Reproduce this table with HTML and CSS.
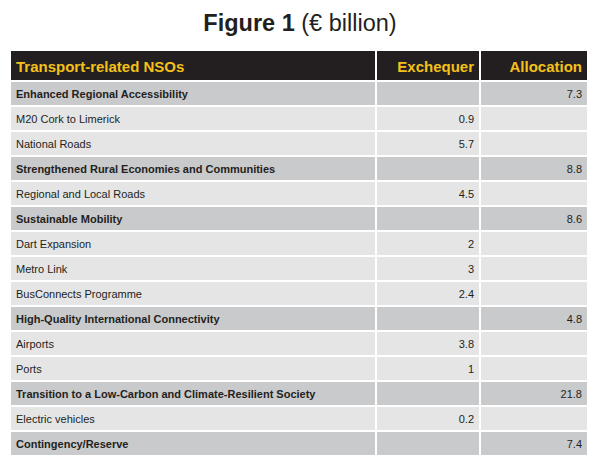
FILE: index.html
```html
<!DOCTYPE html>
<html>
<head>
<meta charset="utf-8">
<link rel="stylesheet" href="styles.css">
</head>
<body>
<h1 class="title"><b>Figure 1</b> (€ billion)</h1>
<table class="nso">
  <thead>
    <tr><th class="name">Transport-related NSOs</th><th class="num">Exchequer</th><th class="num">Allocation</th></tr>
  </thead>
  <tbody>
    <tr class="group"><td>Enhanced Regional Accessibility</td><td></td><td class="num">7.3</td></tr>
    <tr><td>M20 Cork to Limerick</td><td class="num">0.9</td><td></td></tr>
    <tr><td>National Roads</td><td class="num">5.7</td><td></td></tr>
    <tr class="group"><td>Strengthened Rural Economies and Communities</td><td></td><td class="num">8.8</td></tr>
    <tr><td>Regional and Local Roads</td><td class="num">4.5</td><td></td></tr>
    <tr class="group"><td>Sustainable Mobility</td><td></td><td class="num">8.6</td></tr>
    <tr><td>Dart Expansion</td><td class="num">2</td><td></td></tr>
    <tr><td>Metro Link</td><td class="num">3</td><td></td></tr>
    <tr><td>BusConnects Programme</td><td class="num">2.4</td><td></td></tr>
    <tr class="group"><td>High-Quality International Connectivity</td><td></td><td class="num">4.8</td></tr>
    <tr><td>Airports</td><td class="num">3.8</td><td></td></tr>
    <tr><td>Ports</td><td class="num">1</td><td></td></tr>
    <tr class="group"><td>Transition to a Low-Carbon and Climate-Resilient Society</td><td></td><td class="num">21.8</td></tr>
    <tr><td>Electric vehicles</td><td class="num">0.2</td><td></td></tr>
    <tr class="group"><td>Contingency/Reserve</td><td></td><td class="num">7.4</td></tr>
  </tbody>
</table>
</body>
</html>
```

FILE: styles.css
```css
html, body {
  margin: 0;
  padding: 0;
  background: #ffffff;
}
body {
  font-family: "Liberation Sans", Arial, sans-serif;
  color: #231f20;
  width: 600px;
  height: 471px;
  overflow: hidden;
}
.title {
  margin: 0;
  padding-top: 10px;
  height: 49px;
  box-sizing: border-box;
  text-align: center;
  font-size: 23.5px;
  line-height: 27px;
  font-weight: normal;
  color: #231f20;
}
.title b {
  font-weight: bold;
}
.nso {
  margin: 0 0 0 9px;
  width: 580px;
  border-collapse: separate;
  border-spacing: 2px;
  table-layout: fixed;
}
.nso th, .nso td {
  padding: 0 5px;
  white-space: nowrap;
}
.nso th {
  background: #231f20;
  color: #f4c11b;
  font-size: 15px;
  font-weight: bold;
  height: 27px;
  text-align: left;
  padding-top: 2px;
}
.nso th.name { width: 364px; box-sizing: border-box; }
.nso th.num { text-align: right; }
.nso thead th:nth-child(2) { width: 102px; box-sizing: border-box; }
.nso td {
  background: #e5e5e6;
  font-size: 11px;
  height: 23px;
  color: #231f20;
}
.nso tr.group td {
  background: #c9cacc;
  font-weight: bold;
}
.nso td.num { text-align: right; font-weight: normal; }
.nso tr.group td.num { font-weight: normal; }
```
